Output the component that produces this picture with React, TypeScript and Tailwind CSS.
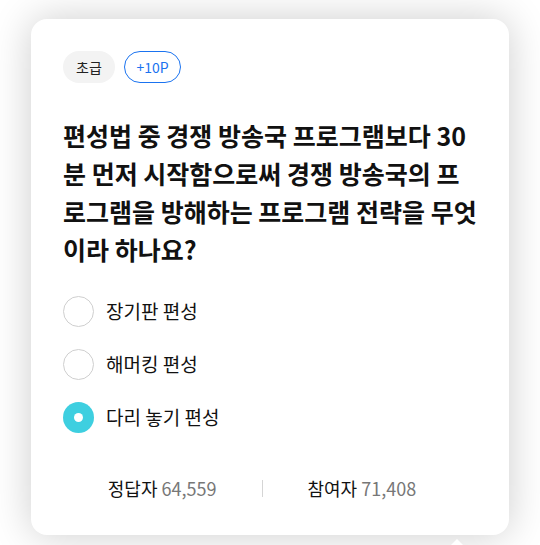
import { useState } from 'react';

const options = ['장기판 편성', '해머킹 편성', '다리 놓기 편성'];

export default function App() {
  const [selected, setSelected] = useState(2);

  return (
    <div
      className="relative min-h-[545px] bg-white px-[31px] pt-[19px] pb-3"
      style={{ fontFamily: '"Noto Sans CJK KR", "Noto Sans", sans-serif' }}
    >
      <div className="rounded-2xl bg-white px-8 pt-8 pb-[33px] shadow-[0_0_40px_rgba(0,0,0,0.2)]">
        <div className="flex items-center gap-[9px]">
          <span className="flex h-8 w-[52px] items-center justify-center rounded-full bg-[#f3f3f3] text-[14px] text-[#222]">
            초급
          </span>
          <span className="flex h-8 w-[57px] items-center justify-center rounded-full border border-[#1a73f0] text-[14px] text-[#1a73f0]">
            +10P
          </span>
        </div>

        <h2 className="mt-[33px] text-[25px] leading-[38px] font-bold text-[#111]">
          편성법 중 경쟁 방송국 프로그램보다 30분 먼저 시작함으로써 경쟁 방송국의 프로그램을 방해하는 프로그램 전략을 무엇이라 하나요?
        </h2>

        <ul className="mt-[28px] flex flex-col gap-[22px]">
          {options.map((label, i) => (
            <li key={label}>
              <button
                onClick={() => setSelected(i)}
                className="flex items-center gap-[12px] text-left"
              >
                {selected === i ? (
                  <span className="flex h-[31px] w-[31px] items-center justify-center rounded-full bg-[#3ecfe0]">
                    <span className="h-[9px] w-[9px] rounded-full bg-white" />
                  </span>
                ) : (
                  <span className="h-[31px] w-[31px] rounded-full border-[1.5px] border-[#cfcfcf] bg-white" />
                )}
                <span className="text-[19px] text-[#111]">{label}</span>
              </button>
            </li>
          ))}
        </ul>

        <div className="mt-[42px] flex items-center justify-center gap-[45px] pr-[16px] text-[18px]">
          <div className="text-[#111]">
            정답자 <span className="text-[#777]">64,559</span>
          </div>
          <div className="h-[17px] w-px bg-[#d5d5d5]" />
          <div className="text-[#111]">
            참여자 <span className="text-[#777]">71,408</span>
          </div>
        </div>
      </div>
      <div className="absolute left-[451px] top-[539px] h-0 w-0 border-x-[6px] border-b-[6px] border-x-transparent border-b-white" />
    </div>
  );
}
